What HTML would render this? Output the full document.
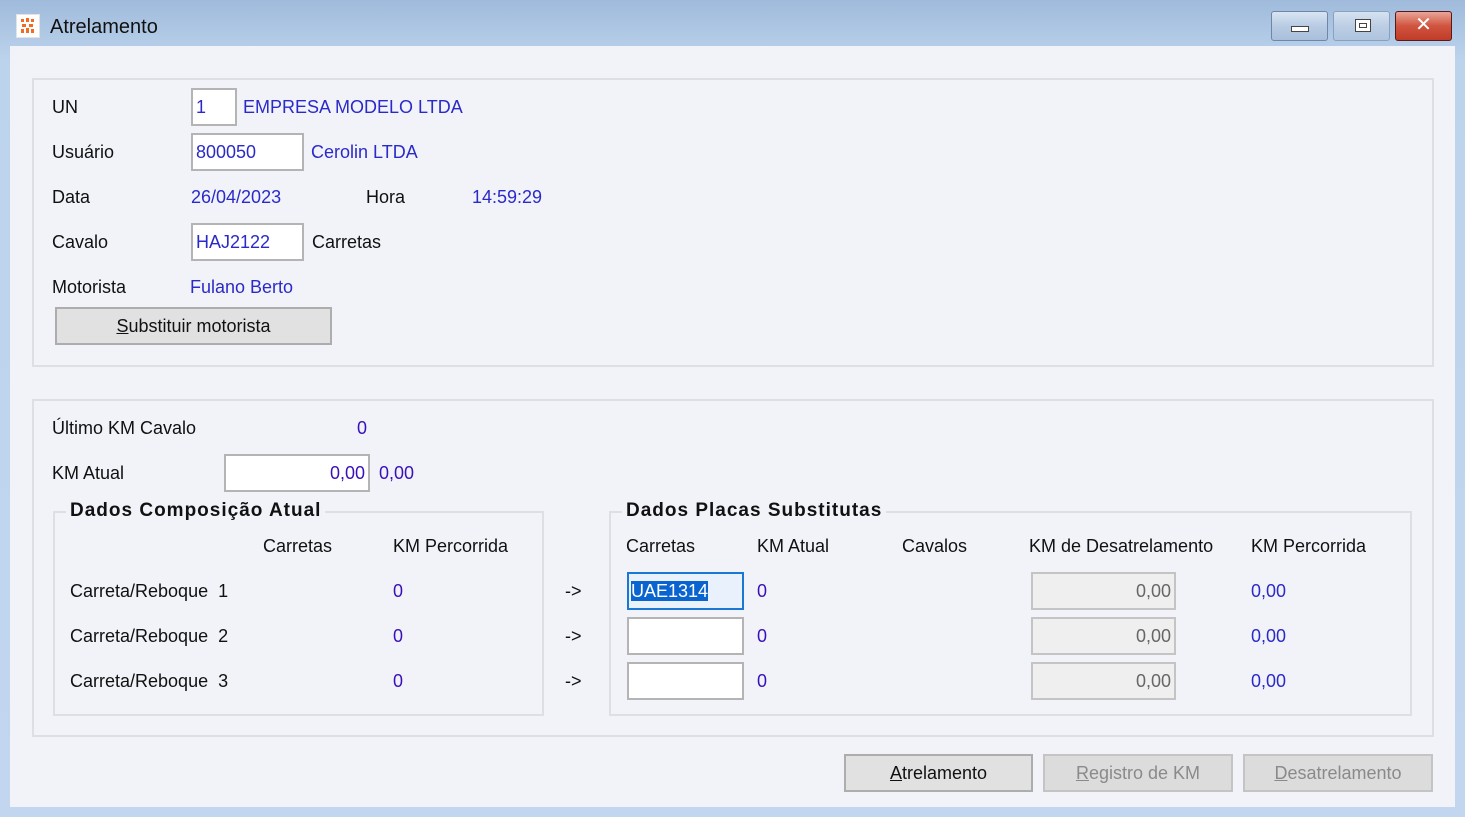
<!DOCTYPE html>
<html><head><meta charset="utf-8"><style>
*{margin:0;padding:0;box-sizing:border-box}
body{width:1465px;height:817px;overflow:hidden;font-family:"Liberation Sans","DejaVu Sans",sans-serif;font-size:18px;color:#111;background:linear-gradient(#9fbadb,#bcd3ec 60px,#c2d7ef);position:relative}
.a{position:absolute;white-space:nowrap;line-height:20px}
.b{color:#2a2ac8}
.p{color:#3a10b8}
.client{position:absolute;left:10px;top:46px;width:1445px;height:761px;background:#f2f3f9}
.grp{position:absolute;border:2px solid #dedfe4}
.inp{position:absolute;background:#fff;border:2px solid #b4b4b4;height:38px;line-height:34px;padding:0 3px;color:#2a2ac8}
.dis{position:absolute;background:#efefef;border:2px solid #c4c4c4;height:38px;line-height:34px;padding:0 3px;text-align:right;color:#666}
.btn{position:absolute;height:38px;border:2px solid #adadad;background:#e1e1e1;text-align:center;line-height:34px}
.btn.d{color:#8a8a8a;background:#dcdcdc;border-color:#c4c4c4}
.leg{position:absolute;background:#f2f3f9;font-weight:bold;padding:0 4px;line-height:20px;font-size:19px;letter-spacing:1px}
</style></head><body>
<div class="a" style="left:16px;top:14px;width:24px;height:24px;background:#fff;border:1px solid #e3e3e3"></div>
<svg class="a" style="left:19px;top:17px" width="18" height="18" viewBox="0 0 18 18"><g fill="#f36b22"><rect x="2" y="2" width="3" height="3"/><rect x="7" y="1" width="3" height="4"/><rect x="12" y="2" width="3" height="3"/><rect x="3" y="7" width="4" height="3"/><rect x="10" y="7" width="4" height="3"/><rect x="2" y="12" width="3" height="4"/><rect x="7" y="11" width="3" height="5"/><rect x="12" y="12" width="3" height="4"/></g></svg>
<div class="a" style="left:50px;top:16px;font-size:20px;line-height:22px">Atrelamento</div>
<div class="a" style="left:1271px;top:11px;width:57px;height:30px;border:1px solid #6f86a8;border-radius:3px;background:linear-gradient(#d9e5f3,#b8cbe3 50%,#a9bfdb)"><div style="position:absolute;left:19px;top:14px;width:18px;height:6px;border:1px solid #444;background:#fff"></div></div>
<div class="a" style="left:1333px;top:11px;width:57px;height:30px;border:1px solid #8aa0bf;border-radius:3px;background:linear-gradient(#d6e2f1,#bccee5 50%,#b0c4de)"><div style="position:absolute;left:21px;top:7px;width:16px;height:13px;border:1px solid #444;background:#fff"><div style="margin:3px;height:5px;border:1px solid #444"></div></div></div>
<div class="a" style="left:1395px;top:11px;width:57px;height:30px;border:1px solid #5a1818;border-radius:3px;background:linear-gradient(#e9a597,#d0543f 50%,#c03c28);color:#fff;font-weight:bold;font-size:20px;text-align:center;line-height:26px">✕</div>
<div class="client"></div>
<div class="grp" style="left:32px;top:78px;width:1402px;height:289px"></div>
<div class="a" style="left:52px;top:97px">UN</div>
<div class="inp" style="left:191px;top:88px;width:46px">1</div>
<div class="a b" style="left:243px;top:97px">EMPRESA MODELO LTDA</div>
<div class="a" style="left:52px;top:142px">Usuário</div>
<div class="inp" style="left:191px;top:133px;width:113px">800050</div>
<div class="a b" style="left:311px;top:142px">Cerolin LTDA</div>
<div class="a" style="left:52px;top:187px">Data</div>
<div class="a b" style="left:191px;top:187px">26/04/2023</div>
<div class="a" style="left:366px;top:187px">Hora</div>
<div class="a b" style="left:472px;top:187px">14:59:29</div>
<div class="a" style="left:52px;top:232px">Cavalo</div>
<div class="inp" style="left:191px;top:223px;width:113px">HAJ2122</div>
<div class="a" style="left:312px;top:232px">Carretas</div>
<div class="a" style="left:52px;top:277px">Motorista</div>
<div class="a b" style="left:190px;top:277px">Fulano Berto</div>
<div class="btn" style="left:55px;top:307px;width:277px"><u>S</u>ubstituir motorista</div>

<div class="grp" style="left:32px;top:399px;width:1402px;height:338px"></div>
<div class="a" style="left:52px;top:418px">Último KM Cavalo</div>
<div class="a p" style="left:357px;top:418px">0</div>
<div class="a" style="left:52px;top:463px">KM Atual</div>
<div class="inp" style="left:224px;top:454px;width:146px;text-align:right;color:#3a10b8">0,00</div>
<div class="a p" style="left:379px;top:463px">0,00</div>

<div class="grp" style="left:53px;top:511px;width:491px;height:205px"></div>
<div class="leg" style="left:66px;top:501px">Dados Composição Atual</div>
<div class="a" style="left:263px;top:536px">Carretas</div>
<div class="a" style="left:393px;top:536px">KM Percorrida</div>
<div class="a" style="left:70px;top:581px">Carreta/Reboque&nbsp; 1</div>
<div class="a" style="left:70px;top:626px">Carreta/Reboque&nbsp; 2</div>
<div class="a" style="left:70px;top:671px">Carreta/Reboque&nbsp; 3</div>
<div class="a p" style="left:393px;top:581px">0</div>
<div class="a p" style="left:393px;top:626px">0</div>
<div class="a p" style="left:393px;top:671px">0</div>
<div class="a" style="left:565px;top:581px">-&gt;</div>
<div class="a" style="left:565px;top:626px">-&gt;</div>
<div class="a" style="left:565px;top:671px">-&gt;</div>

<div class="grp" style="left:609px;top:511px;width:803px;height:205px"></div>
<div class="leg" style="left:622px;top:501px">Dados Placas Substitutas</div>
<div class="a" style="left:626px;top:536px">Carretas</div>
<div class="a" style="left:757px;top:536px">KM Atual</div>
<div class="a" style="left:902px;top:536px">Cavalos</div>
<div class="a" style="left:1029px;top:536px">KM de Desatrelamento</div>
<div class="a" style="left:1251px;top:536px">KM Percorrida</div>
<div class="inp" style="left:627px;top:572px;width:117px;border-color:#1a78d4;background:#e8f1fc;padding:0 2px"><span style="background:#0a64d0;color:#fff">UAE1314</span></div>
<div class="inp" style="left:627px;top:617px;width:117px"></div>
<div class="inp" style="left:627px;top:662px;width:117px"></div>
<div class="a p" style="left:757px;top:581px">0</div>
<div class="a p" style="left:757px;top:626px">0</div>
<div class="a p" style="left:757px;top:671px">0</div>
<div class="dis" style="left:1031px;top:572px;width:145px">0,00</div>
<div class="dis" style="left:1031px;top:617px;width:145px">0,00</div>
<div class="dis" style="left:1031px;top:662px;width:145px">0,00</div>
<div class="a b" style="left:1251px;top:581px">0,00</div>
<div class="a b" style="left:1251px;top:626px">0,00</div>
<div class="a b" style="left:1251px;top:671px">0,00</div>

<div class="btn" style="left:844px;top:754px;width:189px"><u>A</u>trelamento</div>
<div class="btn d" style="left:1043px;top:754px;width:190px"><u>R</u>egistro de KM</div>
<div class="btn d" style="left:1243px;top:754px;width:190px"><u>D</u>esatrelamento</div>
</body></html>
